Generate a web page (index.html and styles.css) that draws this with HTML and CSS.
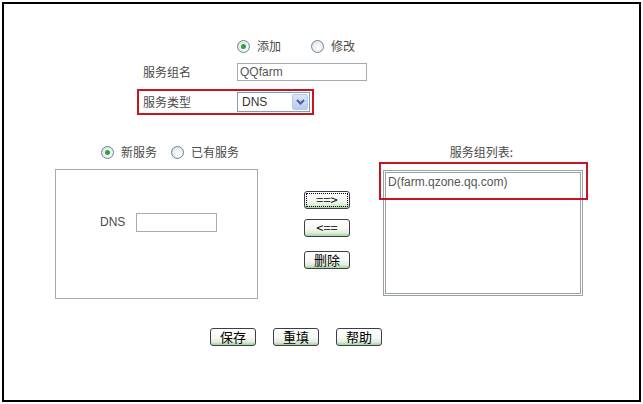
FILE: index.html
```html
<!DOCTYPE html>
<html lang="zh-CN">
<head>
    <meta charset="UTF-8">
    <title>服务组</title>
    <link rel="stylesheet" href="styles.css">
</head>
<body>
    <div class="frame">
        <div class="form-top">
            <div class="row radio-row">
                <label class="radio-item"><span class="radio checked"></span>添加</label>
                <label class="radio-item gap-big"><span class="radio"></span>修改</label>
            </div>
            <div class="row name-row">
                <span class="label">服务组名</span>
                <span class="text-input name-input">QQfarm</span>
            </div>
            <div class="row type-row">
                <span class="label">服务类型</span>
                <span class="select">
                    <span class="select-value">DNS</span>
                    <span class="select-arrow">
                        <svg width="9" height="6" viewBox="0 0 9 6"><path d="M1 1 L4.5 4.5 L8 1" fill="none" stroke="#4d6185" stroke-width="2"/></svg>
                    </span>
                </span>
            </div>
        </div>

        <div class="middle">
            <div class="col-left">
                <div class="col-head left-head">
                    <label class="radio-item"><span class="radio checked"></span>新服务</label>
                    <label class="radio-item gap-small"><span class="radio"></span>已有服务</label>
                </div>
                <div class="service-box">
                    <span class="label-dns">DNS</span>
                    <span class="text-input dns-input"></span>
                </div>
            </div>

            <div class="col-buttons">
                <button class="btn btn-focus">==&gt;</button>
                <button class="btn btn-back">&lt;==</button>
                <button class="btn btn-del">删除</button>
            </div>

            <div class="col-right">
                <div class="col-head right-head">服务组列表:</div>
                <div class="list-box">
                    <div class="list-item">D(farm.qzone.qq.com)</div>
                    <div class="mark"></div>
                </div>
            </div>
        </div>

        <div class="bottom">
            <button class="btn">保存</button>
            <button class="btn">重填</button>
            <button class="btn">帮助</button>
        </div>
    </div>
</body>
</html>
```

FILE: styles.css
```css
body {
    margin: 0;
    background: #fff;
    font-family: "Noto Sans CJK SC", "Liberation Sans", sans-serif;
    font-size: 12px;
    color: #4a4a4a;
}

.frame {
    margin: 2px;
    width: 635px;
    height: 396px;
    border: 2px solid #000;
}

/* top form */
.form-top {
    padding-top: 33px;
}

.row {
    display: flex;
    align-items: center;
    height: 18px;
    margin-left: 139px;
}

.label {
    width: 94px;
    line-height: 18px;
}

.radio-row {
    margin-left: 233px;
}

.radio-item {
    display: flex;
    align-items: center;
    line-height: 18px;
}

.gap-big {
    margin-left: 30px;
}

.gap-small {
    margin-left: 14px;
}

.radio {
    display: inline-block;
    width: 11px;
    height: 11px;
    border: 1px solid #6b83a0;
    border-radius: 50%;
    background: radial-gradient(circle at 60% 60%, #ffffff 0%, #e3e6ea 70%, #c9ced6 100%);
    margin-right: 7px;
    position: relative;
}

.radio.checked::after {
    content: "";
    position: absolute;
    left: 3px;
    top: 3px;
    width: 5px;
    height: 5px;
    border-radius: 50%;
    background: #2fa33a;
}

.name-row {
    margin-top: 8px;
}

.text-input {
    box-sizing: border-box;
    display: inline-block;
    border: 1px solid #a5acb2;
    background: #fff;
    font-family: "Liberation Sans", sans-serif;
    color: #555;
    padding-left: 2px;
}

.name-input {
    width: 130px;
    height: 18px;
    line-height: 16px;
}

.type-row {
    box-sizing: border-box;
    margin-top: 8px;
    margin-left: 133px;
    width: 177px;
    height: 26px;
    border: 2px solid #c4161c;
    padding: 1px 2px 1px 4px;
}

.select {
    box-sizing: border-box;
    display: flex;
    align-items: center;
    justify-content: space-between;
    width: 73px;
    height: 20px;
    border: 1px solid #7f9db9;
    padding: 1px;
    font-family: "Liberation Sans", sans-serif;
    color: #333;
}

.select-value {
    padding-left: 3px;
}

.select-arrow {
    display: flex;
    align-items: center;
    justify-content: center;
    width: 16px;
    height: 16px;
    border-radius: 2px;
    background: linear-gradient(#dbe6fb, #b6cbf3);
    border: 1px solid #b8c9ee;
    box-sizing: border-box;
}

/* middle */
.middle {
    display: flex;
    margin-top: 28px;
    height: 155px;
}

.col-left {
    margin-left: 51px;
    width: 203px;
}

.col-head {
    height: 18px;
    line-height: 18px;
}

.left-head {
    display: flex;
    padding-left: 46px;
}

.service-box {
    box-sizing: border-box;
    margin-top: 8px;
    width: 203px;
    height: 130px;
    border: 1px solid #aaa;
    padding: 43px 0 0 44px;
    display: flex;
    align-items: flex-start;
}

.label-dns {
    width: 36px;
    line-height: 19px;
    font-family: "Liberation Sans", sans-serif;
}

.dns-input {
    width: 81px;
    height: 19px;
}

.col-buttons {
    display: flex;
    flex-direction: column;
    align-items: flex-start;
    margin-left: 46px;
    padding-top: 48px;
}

.btn {
    box-sizing: border-box;
    width: 46px;
    height: 18px;
    padding: 0;
    border: 1px solid #3c3c4e;
    border-radius: 3px;
    background: linear-gradient(#ffffff 0%, #f7f7f3 55%, #e2eedc 80%, #a6d39d 100%);
    font-family: "Noto Sans CJK SC", "Liberation Sans", sans-serif;
    font-size: 13px;
    line-height: 16px;
    color: #000;
}

.btn-focus {
    outline: 1px dotted #000;
    outline-offset: -3px;
}

.btn-back {
    margin-top: 10px;
}

.btn-del {
    margin-top: 14px;
}

.col-right {
    margin-left: 33px;
    width: 200px;
}

.right-head {
    text-align: center;
    padding-right: 3px;
}

.list-box {
    position: relative;
    box-sizing: border-box;
    margin-top: 9px;
    width: 200px;
    height: 126px;
    border: 1px solid #98a2a8;
    box-shadow: inset 0 0 0 1px #fff, inset 0 0 0 2px #98a2a8;
    padding: 3px 4px;
}

.list-item {
    font-family: "Liberation Sans", sans-serif;
    color: #555;
    line-height: 16px;
}

/* annotation frame over the list */
.mark {
    position: absolute;
    left: -5px;
    top: -9px;
    width: 205px;
    height: 34px;
    border: 2px solid #c4161c;
}

/* bottom buttons */
.bottom {
    display: flex;
    gap: 17px;
    margin-top: 30px;
    margin-left: 206px;
}
```
